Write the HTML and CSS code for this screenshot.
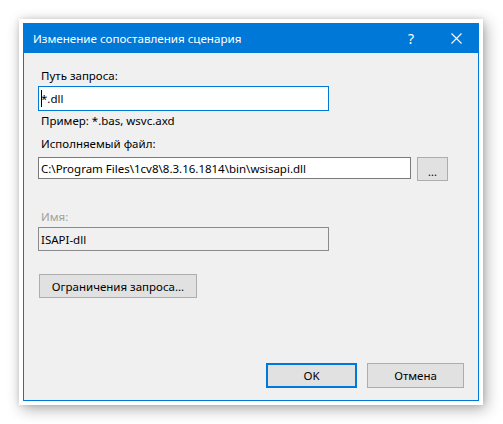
FILE: index.html
```html
<!DOCTYPE html>
<html lang="ru">
<head>
<meta charset="utf-8">
<link rel="stylesheet" href="styles.css">
</head>
<body>
<div class="frame">
  <div class="dialog">
    <div class="titlebar">
      <span class="title">Изменение сопоставления сценария</span>
      <span class="help">?</span>
      <span class="close">
        <svg width="11" height="11" viewBox="0 0 11 11"><path d="M0.5 0.5 L10.5 10.5 M10.5 0.5 L0.5 10.5" stroke="#fff" stroke-width="1.1" fill="none"/></svg>
      </span>
    </div>
    <div class="content">
      <div class="label l1">Путь запроса:</div>
      <div class="input focused"><span class="caret"></span>*.dll</div>
      <div class="label hint">Пример: *.bas, wsvc.axd</div>
      <div class="label l2">Исполняемый файл:</div>
      <div class="row">
        <div class="input path">C:\Program Files\1cv8\8.3.16.1814\bin\wsisapi.dll</div>
        <div class="btn browse">...</div>
      </div>
      <div class="label disabled">Имя:</div>
      <div class="input readonly">ISAPI-dll</div>
      <div class="btn limits">Ограничения запроса...</div>
      <div class="footer">
        <div class="btn ok">OK</div>
        <div class="btn cancel">Отмена</div>
      </div>
    </div>
  </div>
</div>
</body>
</html>
```
FILE: styles.css
```css
html, body {
  margin: 0;
  padding: 0;
  background: #ffffff;
  width: 503px;
  height: 424px;
  overflow: hidden;
}
body {
  font-family: "Noto Sans", "Open Sans", sans-serif;
  font-size: 11.5px;
  color: #000;
}
.frame {
  margin: 19px 0 0 19px;
  width: 456px;
  padding: 4px;
  background: #ffffff;
  box-shadow: 3px 4px 14px rgba(0,0,0,0.32), 0 0 6px rgba(0,0,0,0.12);
}
.dialog {
  width: 454px;
  height: 377px;
  border: 1px solid #0078d7;
  border-top: none;
  background: #f0f0f0;
  display: flex;
  flex-direction: column;
}
.titlebar {
  height: 30px;
  margin: 0 -1px;
  background: #0078d7;
  color: #fff;
  display: flex;
  align-items: center;
  padding-left: 10px;
}
.title {
  font-size: 11.6px;
  flex: 1;
}
.help {
  width: 12px;
  font-size: 14px;
  margin-right: 34px;
  text-align: center;
}
.close {
  width: 11px;
  height: 11px;
  margin-right: 17px;
  display: flex;
}
.content {
  padding: 0 0 0 14px;
  display: flex;
  flex-direction: column;
  align-items: flex-start;
  flex: 1;
}
.label {
  line-height: 16px;
  padding-left: 3px;
  white-space: nowrap;
}
.l1 { margin-top: 15px; }
.hint { margin-top: 2px; }
.l2 { margin-top: 7px; }
.disabled { margin-top: 28px; color: #a0a0a0; }
.input {
  box-sizing: border-box;
  background: #fff;
  border: 1px solid #7a7a7a;
  padding-left: 2px;
  white-space: nowrap;
  display: flex;
  align-items: center;
  position: relative;
}
.focused {
  width: 291px;
  height: 25px;
  margin-top: 2px;
  border-color: #0078d7;
}
.caret {
  position: absolute;
  left: 2px;
  top: 3px;
  width: 1px;
  height: 17px;
  background: #000;
}
.row {
  display: flex;
  margin-top: 5px;
  align-items: flex-start;
}
.path {
  width: 373px;
  height: 22px;
}
.btn {
  box-sizing: border-box;
  background: #e1e1e1;
  border: 1px solid #adadad;
  display: flex;
  align-items: center;
  justify-content: center;
  white-space: nowrap;
}
.browse {
  width: 31px;
  height: 24px;
  margin-left: 6px;
  padding-top: 4px;
  font-size: 11px;
}
.readonly {
  width: 291px;
  height: 24px;
  margin-top: 2px;
  background: #f0f0f0;
  border-color: #8c8c8c;
}
.limits {
  width: 158px;
  height: 24px;
  margin-top: 23px;
  margin-left: 1px;
}
.footer {
  display: flex;
  margin-top: 65px;
  margin-left: 228px;
  gap: 10px;
}
.ok {
  width: 91px;
  height: 25px;
  border: 2px solid #0078d7;
}
.cancel {
  width: 97px;
  height: 25px;
}
```
